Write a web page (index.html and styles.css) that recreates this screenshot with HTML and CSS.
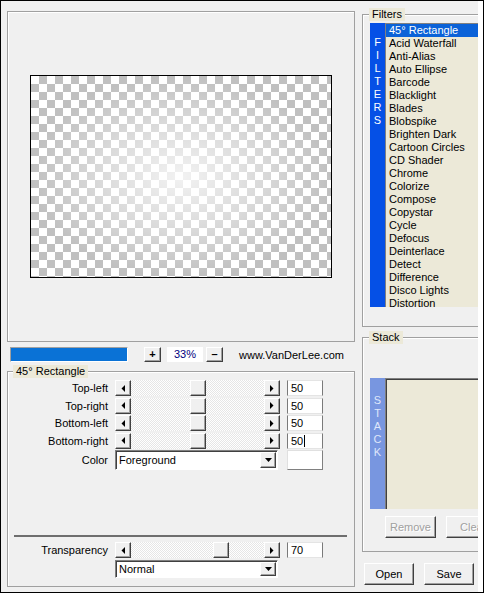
FILE: index.html
```html
<!DOCTYPE html>
<html>
<head>
<meta charset="utf-8">
<link rel="stylesheet" href="styles.css">
</head>
<body>
<div class="win">
  <div class="left">
    <div class="preview"><div class="canvas"></div></div>
    <div class="zoomrow">
      <div class="progress"></div>
      <div class="btn sm plus">+</div>
      <div class="zoomval">33%</div>
      <div class="btn sm minus">–</div>
      <span class="site">www.VanDerLee.com</span>
    </div>
    <fieldset class="group params">
      <legend>45° Rectangle</legend>
      <div class="row">
        <span class="lbl">Top-left</span>
        <div class="slider">
          <div class="btn arrow"><svg width="4" height="7" viewBox="0 0 4 7"><polygon points="4,0 4,7 0.5,3.5" fill="#000"/></svg></div>
          <div class="track"><div class="btn thumb" style="left:calc((100% - 16px) * 0.5)"></div></div>
          <div class="btn arrow"><svg width="4" height="7" viewBox="0 0 4 7"><polygon points="0,0 0,7 3.5,3.5" fill="#000"/></svg></div>
        </div>
        <div class="edit">50</div>
      </div>
      <div class="row">
        <span class="lbl">Top-right</span>
        <div class="slider">
          <div class="btn arrow"><svg width="4" height="7" viewBox="0 0 4 7"><polygon points="4,0 4,7 0.5,3.5" fill="#000"/></svg></div>
          <div class="track"><div class="btn thumb" style="left:calc((100% - 16px) * 0.5)"></div></div>
          <div class="btn arrow"><svg width="4" height="7" viewBox="0 0 4 7"><polygon points="0,0 0,7 3.5,3.5" fill="#000"/></svg></div>
        </div>
        <div class="edit">50</div>
      </div>
      <div class="row">
        <span class="lbl">Bottom-left</span>
        <div class="slider">
          <div class="btn arrow"><svg width="4" height="7" viewBox="0 0 4 7"><polygon points="4,0 4,7 0.5,3.5" fill="#000"/></svg></div>
          <div class="track"><div class="btn thumb" style="left:calc((100% - 16px) * 0.5)"></div></div>
          <div class="btn arrow"><svg width="4" height="7" viewBox="0 0 4 7"><polygon points="0,0 0,7 3.5,3.5" fill="#000"/></svg></div>
        </div>
        <div class="edit">50</div>
      </div>
      <div class="row">
        <span class="lbl">Bottom-right</span>
        <div class="slider">
          <div class="btn arrow"><svg width="4" height="7" viewBox="0 0 4 7"><polygon points="4,0 4,7 0.5,3.5" fill="#000"/></svg></div>
          <div class="track"><div class="btn thumb" style="left:calc((100% - 16px) * 0.5)"></div></div>
          <div class="btn arrow"><svg width="4" height="7" viewBox="0 0 4 7"><polygon points="0,0 0,7 3.5,3.5" fill="#000"/></svg></div>
        </div>
        <div class="edit">50<span class="caret"></span></div>
      </div>
      <div class="row crow">
        <span class="lbl">Color</span>
        <div class="combo">
          <span class="ctext">Foreground</span>
          <div class="btn ddbtn"><svg width="7" height="4" viewBox="0 0 7 4"><polygon points="0,0 7,0 3.5,4" fill="#000"/></svg></div>
        </div>
        <div class="swatch"></div>
      </div>
      <div class="sep"></div>
      <div class="row trow">
        <span class="lbl">Transparency</span>
        <div class="slider">
          <div class="btn arrow"><svg width="4" height="7" viewBox="0 0 4 7"><polygon points="4,0 4,7 0.5,3.5" fill="#000"/></svg></div>
          <div class="track"><div class="btn thumb" style="left:calc((100% - 16px) * 0.7)"></div></div>
          <div class="btn arrow"><svg width="4" height="7" viewBox="0 0 4 7"><polygon points="0,0 0,7 3.5,3.5" fill="#000"/></svg></div>
        </div>
        <div class="edit">70</div>
      </div>
      <div class="row nrow">
        <div class="combo short">
          <span class="ctext">Normal</span>
          <div class="btn ddbtn"><svg width="7" height="4" viewBox="0 0 7 4"><polygon points="0,0 7,0 3.5,4" fill="#000"/></svg></div>
        </div>
      </div>
    </fieldset>
  </div>

  <div class="right">
    <fieldset class="fs filters">
      <legend>Filters</legend>
      <div class="listwrap flist">
        <div class="strip blue"><span>F</span><span>I</span><span>L</span><span>T</span><span>E</span><span>R</span><span>S</span></div>
        <div class="list">
          <div class="item sel">45° Rectangle</div>
          <div class="item">Acid Waterfall</div>
          <div class="item">Anti-Alias</div>
          <div class="item">Auto Ellipse</div>
          <div class="item">Barcode</div>
          <div class="item">Blacklight</div>
          <div class="item">Blades</div>
          <div class="item">Blobspike</div>
          <div class="item">Brighten Dark</div>
          <div class="item">Cartoon Circles</div>
          <div class="item">CD Shader</div>
          <div class="item">Chrome</div>
          <div class="item">Colorize</div>
          <div class="item">Compose</div>
          <div class="item">Copystar</div>
          <div class="item">Cycle</div>
          <div class="item">Defocus</div>
          <div class="item">Deinterlace</div>
          <div class="item">Detect</div>
          <div class="item">Difference</div>
          <div class="item">Disco Lights</div>
          <div class="item">Distortion</div>
        </div>
      </div>
    </fieldset>
    <fieldset class="fs stack">
      <legend>Stack</legend>
      <div class="listwrap slist">
        <div class="strip pale"><span>S</span><span>T</span><span>A</span><span>C</span><span>K</span></div>
        <div class="list deep"></div>
      </div>
      <div class="sbtns">
        <div class="btn pb dis">Remove</div>
        <div class="btn pb dis clear">Clear</div>
      </div>
    </fieldset>
    <div class="bottom">
      <div class="btn pb">Open</div>
      <div class="btn pb">Save</div>
    </div>
  </div>
  <div class="edge"></div>
</div>
</body>
</html>
```

FILE: styles.css
```css
* { box-sizing: border-box; }

body {
  margin: 0;
  font-family: "Liberation Sans", Arial, sans-serif;
  font-size: 11px;
  color: #000;
}

.win {
  width: 484px;
  height: 593px;
  border: 1px solid #000;
  background: #f0f0f0;
  display: flex;
  overflow: hidden;
}

/* ---------- left column ---------- */
.left {
  width: 360px;
  flex: none;
  padding: 10px 0 0 6px;
}

.preview {
  width: 348px;
  height: 331px;
  border: 1px solid #a0a0a0;
  box-shadow: inset 1px 1px 0 #fff;
  display: flex;
  align-items: center;
  justify-content: center;
}

.canvas {
  width: 302px;
  height: 203px;
  border: 1px solid #000;
  background:
    radial-gradient(ellipse closest-side at 50% 50%, rgba(255,255,255,0.8), rgba(255,255,255,0.4) 55%, rgba(255,255,255,0)),
    repeating-conic-gradient(#c0c0c0 0 25%, #fff 0 50%) 0 0 / 16px 16px;
}

.btn {
  background: #f0f0f0;
  border: 1px solid;
  border-color: #fff #404040 #404040 #fff;
  box-shadow: inset -1px -1px 0 #a0a0a0;
  display: flex;
  align-items: center;
  justify-content: center;
}

.zoomrow {
  display: flex;
  align-items: center;
  height: 15px;
  margin-top: 5px;
}

.progress {
  width: 118px;
  height: 15px;
  margin-left: 3px;
  background: #0a72d6;
  border: 1px solid;
  border-color: #a0a0a0 #fff #fff #a0a0a0;
}

.sm {
  width: 17px;
  height: 15px;
  font-weight: bold;
  font-size: 11px;
  line-height: 1;
}
.plus { margin-left: 16px; }
.minus { margin-left: 3px; }

.zoomval {
  width: 36px;
  height: 15px;
  margin-left: 6px;
  background: #fff;
  color: #000080;
  text-align: center;
  line-height: 15px;
}

.site { margin-left: 16px; }

/* ---------- group box ---------- */
fieldset { margin: 0; min-width: 0; }

.group {
  margin-top: 3px;
  width: 348px;
  height: 222px;
  padding: 2px 0 0 0;
  border: 1px solid #a0a0a0;
  box-shadow: inset 1px 1px 0 #fff;
}

legend {
  margin-left: 5px;
  padding: 0 3px;
  background: #ece9d8;
  height: 13px;
  line-height: 13px;
  font-size: 11px;
}

.row {
  display: flex;
  align-items: center;
  height: 16px;
  margin-bottom: 1.5px;
}

.lbl {
  width: 100px;
  margin-right: 7px;
  text-align: right;
  white-space: nowrap;
}

.slider {
  width: 165px;
  height: 16px;
  display: flex;
}

.arrow { width: 16px; height: 16px; flex: none; }

.track {
  flex: 1;
  position: relative;
  background: repeating-conic-gradient(#e6e6e6 0 25%, #fff 0 50%) 0 0 / 2px 2px;
}

.thumb {
  position: absolute;
  top: 0;
  width: 16px;
  height: 16px;
}

.edit {
  width: 36px;
  height: 16px;
  margin-left: 7px;
  background: #fff;
  border-left: 1px solid #7a7a7a;
  border-right: 1px solid #7a7a7a;
  border-top: 1px solid #e4e4e4;
  border-bottom: 1px solid #e4e4e4;
  padding-left: 3px;
  line-height: 14px;
  display: flex;
  align-items: center;
}

.caret {
  display: inline-block;
  width: 1px;
  height: 12px;
  background: #000;
  margin-left: 1px;
}

.crow { height: 20px; margin-top: 1px; margin-bottom: 0; }

.combo {
  width: 163px;
  height: 20px;
  background: #fff;
  border: 1px solid;
  border-color: #808080 #fff #fff #808080;
  box-shadow: inset 1px 1px 0 #404040;
  display: flex;
  align-items: center;
  padding: 1px 1px 1px 2px;
}
.combo.short { height: 18px; margin-left: 107px; }

.ctext { flex: 1; padding-left: 1px; }

.ddbtn { width: 16px; height: 16px; flex: none; }
.short .ddbtn { height: 14px; }

.swatch {
  width: 36px;
  height: 20px;
  margin-left: 9px;
  background: #fff;
  border: 1px solid;
  border-color: #e0e0e0 #808080 #808080 #e0e0e0;
}

.sep {
  margin: 65px 0 0 6px;
  width: 333px;
  height: 2px;
  background: #6e6e6e;
}

.trow { margin-top: 5px; margin-bottom: 0; }
.nrow { margin-top: 2px; height: 18px; }

/* ---------- right column ---------- */
.right {
  width: 117px;
  flex: none;
  overflow: hidden;
  padding-top: 7px;
}

.fs {
  margin-left: 1px;
  width: 150px;
  padding: 0;
  border: 1px solid #a0a0a0;
  box-shadow: inset 1px 1px 0 #fff;
}
.fs legend { margin-left: 6px; }

.filters { height: 319px; padding-top: 2px; }
.stack { height: 221px; margin-top: 4px; padding-top: 34px; }

.listwrap {
  display: flex;
  margin-left: 7px;
}
.flist { height: 284px; }
.slist { height: 131px; }

.strip {
  width: 15px;
  flex: none;
  display: flex;
  flex-direction: column;
  align-items: center;
  line-height: 13px;
  font-size: 11px;
}
.blue { background: #0550e6; color: #fff; padding-top: 13px; }
.pale { background: #7896e0; color: #dfe6fb; padding-top: 16px; }

.list {
  flex: 1;
  background: #ece9d8;
  border-top: 1px solid #808080;
  border-left: 1px solid #808080;
  overflow: hidden;
}
.list.deep { box-shadow: inset 1px 1px 0 #404040; }

.item {
  height: 13px;
  line-height: 13px;
  padding-left: 3px;
  white-space: nowrap;
}
.item.sel { background: #0b62d8; color: #fff; }

.sbtns {
  display: flex;
  margin: 7px 0 0 22px;
}

.pb {
  width: 50px;
  height: 22px;
  flex: none;
  font-size: 11px;
}
.sbtns .pb { width: 51px; }
.sbtns .clear { margin-left: 10px; width: 60px; justify-content: flex-start; padding-left: 13px; }
.dis { color: #a0a0a0; text-shadow: 1px 1px 0 #fff; }

.bottom {
  display: flex;
  gap: 10px;
  margin: 11px 0 0 3px;
}

.edge {
  width: 5px;
  flex: none;
  background: #fff;
}
```
